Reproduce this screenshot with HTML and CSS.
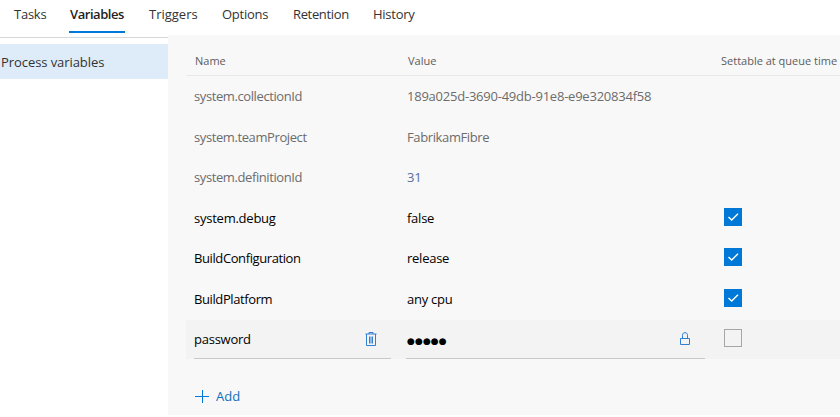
FILE: index.html
```
<!DOCTYPE html>
<html lang="en">
<head>
<meta charset="utf-8">
<title>Variables</title>
<link rel="stylesheet" href="styles.css">
</head>
<body>
<div class="layout">
  <nav class="tabs">
    <a class="tab w-tasks">Tasks</a><a class="tab w-variables active">Variables</a><a class="tab w-triggers">Triggers</a><a class="tab w-options">Options</a><a class="tab w-retention">Retention</a><a class="tab">History</a>
  </nav>
  <aside class="sidebar"><div class="side-item">Process variables</div></aside>
  <main class="panel">
    <div class="head"><span>Name</span><span>Value</span><span>Settable at queue time</span></div>
    <div class="rows">
      <div class="row muted"><div class="cell">system.collectionId</div><div class="cell guid">189a025d-3690-49db-91e8-e9e320834f58</div></div>
      <div class="row muted"><div class="cell">system.teamProject</div><div class="cell tight">FabrikamFibre</div></div>
      <div class="row muted"><div class="cell">system.definitionId</div><div class="cell number">31</div></div>
      <div class="row"><div class="cell loose">system.debug</div><div class="cell">false</div><div class="check on"><svg viewBox="0 0 18 18"><path d="M4.500 9l3.200 3 6.300-6.200"/></svg></div></div>
      <div class="row"><div class="cell">BuildConfiguration</div><div class="cell">release</div><div class="check on"><svg viewBox="0 0 18 18"><path d="M4.500 9l3.200 3 6.300-6.200"/></svg></div></div>
      <div class="row"><div class="cell">BuildPlatform</div><div class="cell">any cpu</div><div class="check on"><svg viewBox="0 0 18 18"><path d="M4.500 9l3.200 3 6.300-6.200"/></svg></div></div>
      <div class="row editing">
        <div class="cell loose"><span>password</span><svg class="icon" viewBox="0 0 12 14"><path d="M.5 2h11M4 2V.5h4V2M1.500 2v11.500h9V2M4.500 4.500v7M6 4.500v7M7.500 4.500v7"/></svg></div>
        <div class="cell"><span class="dots">●●●●●</span><svg class="icon" viewBox="0 0 12 14"><path d="M1.500 6.500h9v6h-9zM3.500 6.500V3.200C3.500 1.500 4.500.7 6 .7s2.500.8 2.500 2.500v3.300"/></svg></div>
        <div class="check"></div>
      </div>
    </div>
    <div class="add"><svg viewBox="0 0 14 14"><path d="M0 7.500h14M7.500 1v13"/></svg><span>Add</span></div>
  </main>
</div>
</body>
</html>
```
FILE: styles.css
```
* { box-sizing: border-box; }
body { margin: 0; background: #fff; color: #333; font-family: "Open Sans", "Noto Sans", sans-serif; font-size: 13px; line-height: 18px; }
.layout { display: grid; grid-template: 35px 380px / 168px 672px; width: 840px; height: 417px; overflow: hidden; white-space: nowrap; }
.tabs { grid-column: 1 / 3; display: flex; padding-left: 14px; height: 33px; letter-spacing: -.25px; }
.tab { padding-top: 5px; }
.w-tasks { width: 55px; }
.w-variables { width: 56px; margin-right: 24px; padding-left: 1px; letter-spacing: -.45px; }
.w-triggers { width: 73px; letter-spacing: 0; }
.w-options { width: 71px; }
.w-retention { width: 80px; letter-spacing: -.35px; }
.active { color: #222; font-weight: 600; border-bottom: 2px solid #0078d7; }
.sidebar { margin-top: 2px; border-top: 1px solid #d8d8d8; padding-top: 6px; }
.side-item { height: 35px; padding: 9px 0 0 1px; background: #deecf9; letter-spacing: -.07px; }
.panel { background: #f8f8f8; padding-left: 18px; }
.head { display: grid; grid-template-columns: 213px 313px 1fr; height: 41px; padding: 17px 0 0 9px; border-bottom: 1px solid #e8e8e8; font-size: 11px; color: #5c5c5c; }
.rows { display: grid; row-gap: 1.4px; padding-top: 1.6px; }
.row { display: grid; grid-template-columns: 197px 299px 22px; column-gap: 15px; height: 39px; padding-left: 8px; color: #000; }
.row.muted { color: #6c6c6c; }
.cell { display: flex; justify-content: space-between; height: 39px; padding: 10px 0 0 1px; letter-spacing: -.25px; }
.cell:first-child { padding-left: 0; letter-spacing: -.4px; }
.cell:first-child.loose { letter-spacing: -.24px; }
.cell.guid { letter-spacing: -.23px; }
.cell.tight { letter-spacing: -.38px; }
.row:first-child .cell { padding-top: 9px; }
.number { color: #566f9c; }
.editing { background: #f3f3f3; }
.editing .cell { border-bottom: 1px solid #c8c8c8; }
.check { width: 18px; height: 18px; margin: 9.2px 0 0 4px; border: 1px solid #a6a6a6; }
.check.on { border: 0; background: #0078d7; }
.check svg { display: block; width: 18px; height: 18px; fill: none; stroke: #fff; stroke-width: 1.4; }
.icon { width: 12px; height: 14px; margin: 2px 14px 0 0; fill: none; stroke: #2f7fd3; stroke-width: 1; }
.dots { padding-top: 2px; font-family: "DejaVu Sans", sans-serif; font-size: 9px; letter-spacing: .1px; }
.add { display: flex; align-items: center; gap: 7px; height: 20px; margin: 27px 0 0 9px; color: #106ebe; }
.add svg { width: 14px; height: 14px; fill: none; stroke: #0078d7; }
```
